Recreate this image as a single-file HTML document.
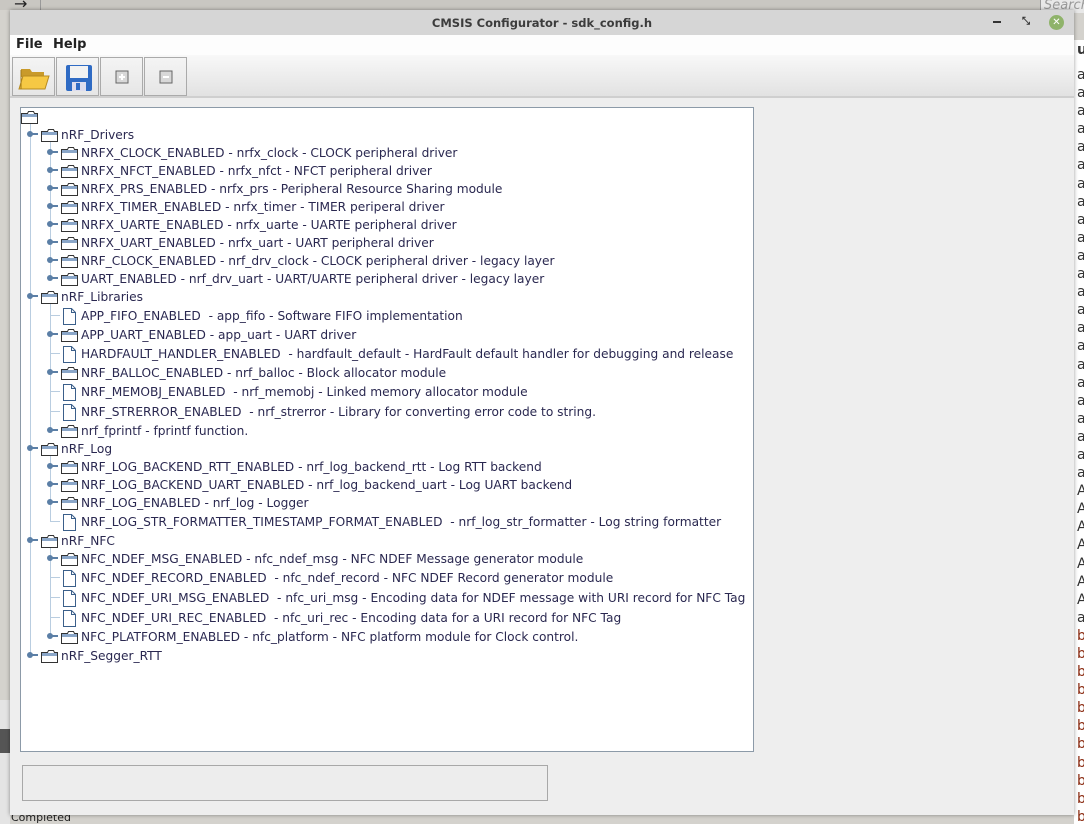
<!DOCTYPE html>
<html><head><meta charset="utf-8"><style>
*{margin:0;padding:0;box-sizing:border-box}
html,body{width:1084px;height:824px;overflow:hidden}
body{background:#d4d2cd;font-family:"DejaVu Sans","Liberation Sans",sans-serif;position:relative}
.abs{position:absolute}
#win{position:absolute;left:10px;top:10px;width:1064px;height:805px;background:#eeeeee;box-shadow:0 0 4px rgba(0,0,0,.4)}
#title{position:absolute;left:0;top:0;width:1064px;height:25px;background:#d6d6d6;text-align:center;font-size:11.5px;font-weight:bold;color:#3c3c3c;line-height:27px}
#menu{position:absolute;left:0;top:25px;width:1064px;height:20px;background:#fdfdfd;font-size:13px;font-weight:bold;color:#222;line-height:20px}
#tb{position:absolute;left:0;top:45px;width:1064px;height:43px;background:linear-gradient(#f8f8f8,#e2e2e2);border-bottom:2px solid #cfcfcf}
.btn{position:absolute;top:2px;width:43px;height:39px;border:1px solid #aaa;background:linear-gradient(#f4f4f4,#e6e6e6)}
#tree{position:absolute;left:10px;top:97px;width:734px;height:645px;background:#fff;border:1px solid #8c9aa8}
.r{position:absolute;height:18px;line-height:18px;font-size:12.2px;color:#2a2850;white-space:pre}
.vl{position:absolute;width:1px;background:#b9cde0}
.hl{position:absolute;height:1px;background:#b9cde0}
.kn{position:absolute;width:6px;height:6px;border-radius:50%;background:#5b7fa6}
.kl{position:absolute;height:2px;background:#5b7fa6;width:6px}
#status{position:absolute;left:12px;top:755px;width:526px;height:36px;border:1px solid #a8a8a8;background:#ededed}
.rs{position:absolute;left:1077px;font-size:14px;color:#333;line-height:18px}
</style></head><body>
<div class="abs" style="left:0;top:0;width:1084px;height:10px;background:#c9c7c2"></div>
<div class="abs" style="left:14px;top:-4px;font-size:16px;line-height:16px;color:#222">→</div>
<div class="abs" style="left:40px;top:0;width:1px;height:10px;background:#999"></div>
<div class="abs" style="left:1040px;top:0;width:44px;height:13px;background:#e8e8e8;border-left:1px solid #999;font-style:italic;color:#999;font-size:13px;padding-left:3px;line-height:12px;overflow:hidden">Search</div>
<div class="abs" style="left:1074px;top:40px;width:10px;height:784px;background:#fff;overflow:hidden"><div class="rs" style="left:3px;top:1px;font-weight:bold">u</div>
<div class="rs" style="left:3px;top:26px;line-height:18.1px">a<br>a<br>a<br>a<br>a<br>a<br>a<br>a<br>a<br>a<br>a<br>a<br>a<br>a<br>a<br>a<br>a<br>a<br>a<br>a<br>a<br>a<br>a<br>A<br>A<br>A<br>A<br>A<br>A<br>A<br>a<br><span style="color:#8a2a10">b<br>b<br>b<br>b<br>b<br>b<br>b<br>b<br>b<br>b<br>b<br>b<br>b<br>b<br>b<br>b<br>b</span></div></div>
<div class="abs" style="left:0;top:700px;width:10px;height:124px;background:#e4e4e4"></div>
<div class="abs" style="left:0;top:729px;width:10px;height:24px;background:#555"></div>
<div class="abs" style="left:11px;top:811px;height:13px;font-size:11px;line-height:13px;color:#222;overflow:hidden">Completed</div>
<div id="win">
<div id="title">CMSIS Configurator - sdk_config.h
<div class="abs" style="left:983px;top:11px;width:8px;height:2px;background:#333"></div>
<div class="abs" style="left:1012px;top:7px;font-size:10px;line-height:10px;color:#333">⤡</div>
<div class="abs" style="left:1039px;top:5px;width:15px;height:15px;border-radius:50%;background:#8fb36a;color:#fff;font-size:10px;line-height:15px">✕</div>
</div>
<div id="menu"><span style="position:absolute;left:6px">File</span><span style="position:absolute;left:43px">Help</span></div>
<div id="tb">
<div class="btn" style="left:2px"><svg width="43" height="39"><path d="M8 11h9l2 3h12v5H8z" fill="#c99a2a"/><path d="M6 31l4-13h26l-4 13z" fill="#f6c844" stroke="#b78a20"/><path d="M8 31V12" stroke="#a07818"/></svg></div>
<div class="btn" style="left:46px"><svg width="43" height="39"><rect x="9" y="7" width="26" height="26" rx="2" fill="#2f6bc4"/><rect x="13" y="8" width="18" height="12" fill="#f2f2f2"/><rect x="15" y="24" width="14" height="9" fill="#dde"/><rect x="19" y="25" width="4" height="7" fill="#2f6bc4"/></svg></div>
<div class="btn" style="left:90px"><svg width="43" height="39"><rect x="15" y="13" width="12" height="12" fill="#d8d8d8" stroke="#666"/><path d="M18 19h6M21 16v6" stroke="#fff" stroke-width="2"/></svg></div>
<div class="btn" style="left:134px"><svg width="43" height="39"><rect x="15" y="13" width="12" height="12" fill="#d8d8d8" stroke="#666"/><path d="M18 19h6" stroke="#fff" stroke-width="2"/></svg></div>
</div>
<div id="tree"></div>
<div id="status"></div>
</div>
<div id="rows"></div>
<script>
const F='<svg width="17" height="13" style="position:absolute;top:3px"><path d="M.5 2.5h6l1-2h5l1 2h3v10H.5z" fill="#fff" stroke="#333"/><rect x="1" y="3" width="15" height="3" fill="#8aa6c8"/></svg>';
const D='<svg width="13" height="17" style="position:absolute;top:1px"><path d="M.5.5h8l4 4v12H.5z" fill="#fff" stroke="#3b5f8a"/><path d="M8.5.5v4h4" fill="none" stroke="#3b5f8a"/></svg>';
const rows=[
[116,0,'F',''],
[134,1,'F','nRF_Drivers'],
[152,2,'F','NRFX_CLOCK_ENABLED - nrfx_clock - CLOCK peripheral driver'],
[170,2,'F','NRFX_NFCT_ENABLED - nrfx_nfct - NFCT peripheral driver'],
[188,2,'F','NRFX_PRS_ENABLED - nrfx_prs - Peripheral Resource Sharing module'],
[206,2,'F','NRFX_TIMER_ENABLED - nrfx_timer - TIMER periperal driver'],
[224,2,'F','NRFX_UARTE_ENABLED - nrfx_uarte - UARTE peripheral driver'],
[242,2,'F','NRFX_UART_ENABLED - nrfx_uart - UART peripheral driver'],
[260,2,'F','NRF_CLOCK_ENABLED - nrf_drv_clock - CLOCK peripheral driver - legacy layer'],
[278,2,'F','UART_ENABLED - nrf_drv_uart - UART/UARTE peripheral driver - legacy layer'],
[296,1,'F','nRF_Libraries'],
[315,2,'D','APP_FIFO_ENABLED  - app_fifo - Software FIFO implementation'],
[334,2,'F','APP_UART_ENABLED - app_uart - UART driver'],
[353,2,'D','HARDFAULT_HANDLER_ENABLED  - hardfault_default - HardFault default handler for debugging and release'],
[372,2,'F','NRF_BALLOC_ENABLED - nrf_balloc - Block allocator module'],
[391,2,'D','NRF_MEMOBJ_ENABLED  - nrf_memobj - Linked memory allocator module'],
[411,2,'D','NRF_STRERROR_ENABLED  - nrf_strerror - Library for converting error code to string.'],
[430,2,'F','nrf_fprintf - fprintf function.'],
[448,1,'F','nRF_Log'],
[466,2,'F','NRF_LOG_BACKEND_RTT_ENABLED - nrf_log_backend_rtt - Log RTT backend'],
[484,2,'F','NRF_LOG_BACKEND_UART_ENABLED - nrf_log_backend_uart - Log UART backend'],
[502,2,'F','NRF_LOG_ENABLED - nrf_log - Logger'],
[521,2,'D','NRF_LOG_STR_FORMATTER_TIMESTAMP_FORMAT_ENABLED  - nrf_log_str_formatter - Log string formatter'],
[540,1,'F','nRF_NFC'],
[558,2,'F','NFC_NDEF_MSG_ENABLED - nfc_ndef_msg - NFC NDEF Message generator module'],
[577,2,'D','NFC_NDEF_RECORD_ENABLED  - nfc_ndef_record - NFC NDEF Record generator module'],
[597,2,'D','NFC_NDEF_URI_MSG_ENABLED  - nfc_uri_msg - Encoding data for NDEF message with URI record for NFC Tag'],
[617,2,'D','NFC_NDEF_URI_REC_ENABLED  - nfc_uri_rec - Encoding data for a URI record for NFC Tag'],
[636,2,'F','NFC_PLATFORM_ENABLED - nfc_platform - NFC platform module for Clock control.'],
[655,1,'F','nRF_Segger_RTT']];
let h='<div class="vl" style="left:30px;top:122px;height:533px"></div>';
[[134,278],[296,430],[448,521],[540,636]].forEach(([a,b])=>h+=`<div class="vl" style="left:50px;top:${a+6}px;height:${b-a-6}px"></div>`);
rows.forEach(([y,l,t,s])=>{
 const ix=21+20*l, tx=ix+20, top=y-8;
 if(l>0){const cx=10+20*l;
  if(t=='F'){h+=`<div class="kn" style="left:${cx-3}px;top:${y-3}px"></div><div class="kl" style="left:${cx+2}px;top:${y-1}px"></div>`;}
  else h+=`<div class="hl" style="left:${cx}px;top:${y}px;width:10px"></div>`;}
 h+=`<div class="r" style="left:${t=='D'?ix+2:ix}px;top:${top}px;width:20px">${t=='F'?F:D}</div><div class="r" style="left:${tx}px;top:${top}px">${s}</div>`;
});
document.getElementById('rows').innerHTML=h;
</script>
</body></html>
